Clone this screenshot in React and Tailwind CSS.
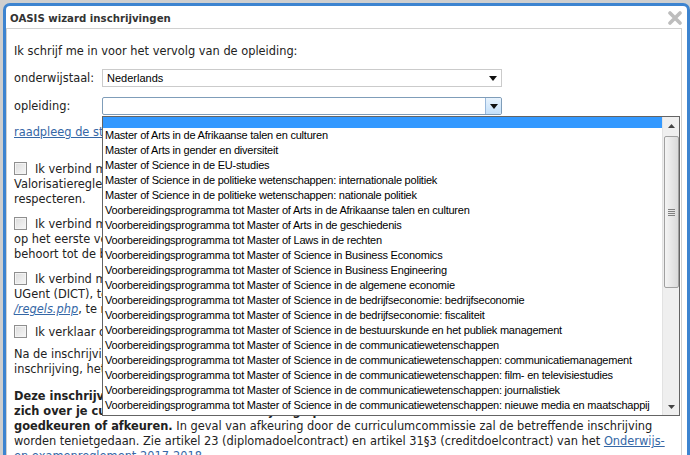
const options = [
  "Master of Arts in de Afrikaanse talen en culturen",
  "Master of Arts in gender en diversiteit",
  "Master of Science in de EU-studies",
  "Master of Science in de politieke wetenschappen: internationale politiek",
  "Master of Science in de politieke wetenschappen: nationale politiek",
  "Voorbereidingsprogramma tot Master of Arts in de Afrikaanse talen en culturen",
  "Voorbereidingsprogramma tot Master of Arts in de geschiedenis",
  "Voorbereidingsprogramma tot Master of Laws in de rechten",
  "Voorbereidingsprogramma tot Master of Science in Business Economics",
  "Voorbereidingsprogramma tot Master of Science in Business Engineering",
  "Voorbereidingsprogramma tot Master of Science in de algemene economie",
  "Voorbereidingsprogramma tot Master of Science in de bedrijfseconomie: bedrijfseconomie",
  "Voorbereidingsprogramma tot Master of Science in de bedrijfseconomie: fiscaliteit",
  "Voorbereidingsprogramma tot Master of Science in de bestuurskunde en het publiek management",
  "Voorbereidingsprogramma tot Master of Science in de communicatiewetenschappen",
  "Voorbereidingsprogramma tot Master of Science in de communicatiewetenschappen: communicatiemanagement",
  "Voorbereidingsprogramma tot Master of Science in de communicatiewetenschappen: film- en televisiestudies",
  "Voorbereidingsprogramma tot Master of Science in de communicatiewetenschappen: journalistiek",
  "Voorbereidingsprogramma tot Master of Science in de communicatiewetenschappen: nieuwe media en maatschappij",
  "Voorbereidingsprogramma tot Master of Science in de communicatiewetenschappen: politieke communicatie",
];

function Arrow() {
  return (
    <svg width="8" height="5" viewBox="0 0 8 5">
      <path d="M0 0h8L4 5z" fill="#111" />
    </svg>
  );
}

function Checkbox() {
  return (
    <span className="inline-block w-[13px] h-[13px] mr-[8px] align-[-2px] border border-[#8f8f8f] bg-gradient-to-br from-[#dcdcdc] to-[#f7f7f7] shadow-[inset_0_0_0_1px_#f4f4f4]"></span>
  );
}

function Dropdown() {
  return (
    <div className="absolute left-0 top-[calc(100%+1px)] w-[578px] h-[300px] border border-[#646464] bg-white flex z-10">
      <div className="flex-1 overflow-hidden font-['Liberation_Sans',sans-serif] text-[11px] tracking-[-0.22px] text-black">
        <div className="h-[11px] bg-[#3399ff]"></div>
        {options.map((o) => (
          <div key={o} className="h-[15px] leading-[15px] pl-[2px] whitespace-nowrap">
            {o}
          </div>
        ))}
      </div>
      <div className="w-[17px] bg-[#efefef] border-l border-[#e2e2e2] flex flex-col items-center">
        <div className="h-[17px] w-full flex items-center justify-center">
          <svg width="7" height="4" viewBox="0 0 7 4">
            <path d="M0 4L3.5 0L7 4z" fill="#444" />
          </svg>
        </div>
        <div className="mt-[2px] h-[152px] w-[15px] rounded-[2px] border border-[#a0a0a0] bg-gradient-to-r from-[#f4f4f4] to-[#dadada] flex items-center justify-center">
          <div className="flex flex-col gap-[1px]">
            <div className="w-[7px] h-[1px] bg-[#808080]"></div>
            <div className="w-[7px] h-[1px] bg-[#808080]"></div>
            <div className="w-[7px] h-[1px] bg-[#808080]"></div>
            <div className="w-[7px] h-[1px] bg-[#808080]"></div>
          </div>
        </div>
        <div className="flex-1"></div>
        <div className="h-[17px] w-full flex items-center justify-center">
          <svg width="7" height="4" viewBox="0 0 7 4">
            <path d="M0 0L3.5 4L7 0z" fill="#444" />
          </svg>
        </div>
      </div>
    </div>
  );
}

export default function App() {
  const link = "text-[#3567a6] underline";
  return (
    <div className="w-[690px] h-[455px] overflow-hidden bg-[#cfcfcf] pt-[3px] pl-[3px]">
      <div className="h-[470px] rounded-t-[7px] border-[3px] border-b-0 border-[#3d84d0] bg-white flex flex-col font-['DejaVu_Sans',sans-serif] text-[11.4px] leading-[15px] text-[#222]">
        <div className="h-[22px] shrink-0 flex items-center justify-between pl-[4px] pr-[5px] pt-[2px]">
          <span className="font-bold text-[10.2px] text-[#333]">OASIS wizard inschrijvingen</span>
          <svg width="14" height="14" viewBox="0 0 14 14">
            <path d="M2 2L12 12M12 2L2 12" stroke="#bdbdbd" strokeWidth="3.6" strokeLinecap="round" />
          </svg>
        </div>
        <div className="flex-1 mr-[5px] border border-b-0 border-[#d0d0d0] px-[7px] pt-[15px] whitespace-nowrap">
          <p>Ik schrijf me in voor het vervolg van de opleiding:</p>
          <div className="mt-[10px] flex items-center">
            <span className="w-[88px]">onderwijstaal:</span>
            <div className="w-[400px] h-[18px] border border-[#cbcbcb] flex items-center justify-between pl-[4px] pr-[4px] font-['Liberation_Sans',sans-serif] text-[11px] text-black">
              <span>Nederlands</span>
              <Arrow />
            </div>
          </div>
          <div className="mt-[10px] flex items-center">
            <span className="w-[88px]">opleiding:</span>
            <div className="relative">
              <div className="w-[400px] h-[18px] border border-[#7f9db9] rounded-[2px] flex justify-end">
                <div className="w-[16px] h-full border-l border-[#98b8db] bg-gradient-to-b from-[#e8f3fd] to-[#c4e0fa] rounded-r-[2px] flex items-center justify-center">
                  <Arrow />
                </div>
              </div>
              <Dropdown />
            </div>
          </div>
          <p className="mt-[10px]">
            <a className={link}>raadpleeg de studiefiche van deze opleiding</a>
          </p>
          <p className="mt-[22px]">
            <Checkbox />Ik verbind me ertoe het reglement ter bescherming van persoonsgegevens en het
            <br />
            Valorisatiereglement van de Universiteit Gent te
            <br />
            respecteren.
          </p>
          <p className="mt-[10px]">
            <Checkbox />Ik verbind me ertoe het verschuldigde studiegeld te betalen
            <br />
            op het eerste verzoek van de universiteit, zoals vastgelegd in het reglement dat
            <br />
            behoort tot de bevoegdheid van de universiteit.
          </p>
          <p className="mt-[10px]">
            <Checkbox />Ik verbind me ertoe het reglement voor het gebruik van de ICT-infrastructuur van de
            <br />
            UGent (DICT), te vinden op <a className={link}>http://helpdesk.ugent.be</a>
            <br />
            <a className={link + " italic"}>/regels.php</a>, te respecteren.
          </p>
          <p className="mt-[8px]">
            <Checkbox />Ik verklaar dat alle opgegeven gegevens correct zijn.
          </p>
          <p className="mt-[7px]">
            Na de inschrijving ontvang je een bevestiging per e-mail. Je kan na de
            <br />
            inschrijving, het curriculum samenstellen via OASIS.
          </p>
          <p className="mt-[12px]">
            <b>Deze inschrijving is voorlopig. De curriculumcommissie van je opleiding buigt</b>
            <br />
            <b>zich over je curriculum en zal de inschrijving op basis daarvan</b>
            <br />
            <b>goedkeuren of afkeuren.</b> In geval van afkeuring door de curriculumcommissie zal de betreffende inschrijving
            <br />
            worden tenietgedaan. Zie artikel 23 (diplomadoelcontract) en artikel 31§3 (creditdoelcontract) van het{" "}
            <a className={link}>
              Onderwijs-
              <br />
              en examenreglement 2017-2018
            </a>
            .
          </p>
        </div>
      </div>
    </div>
  );
}
